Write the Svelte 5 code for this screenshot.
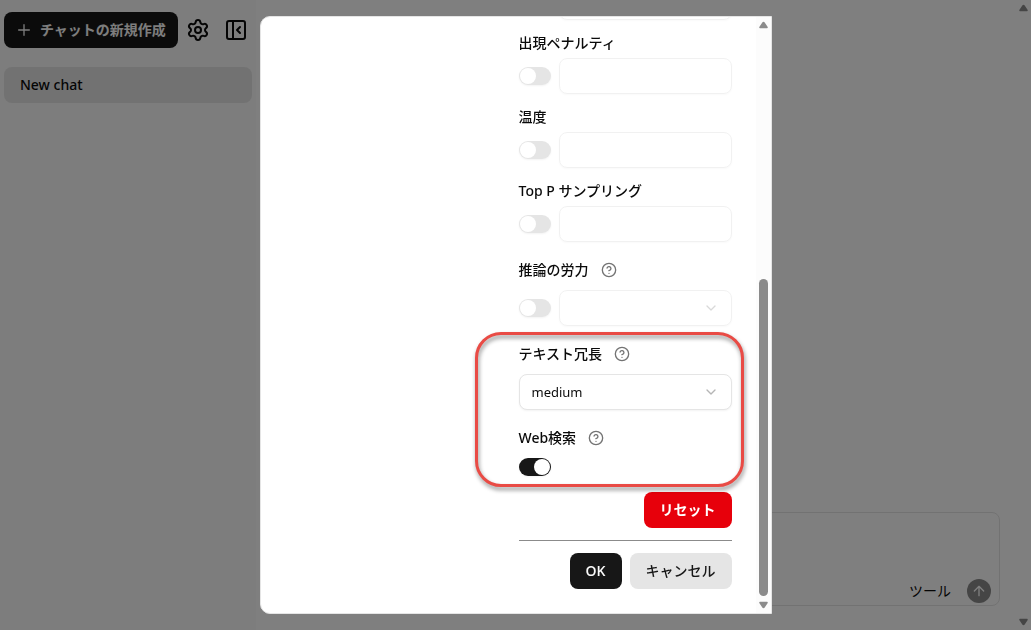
<script>
  const sampling = [
    { id: 'frequency', label: '' },
    { id: 'presence', label: '出現ペナルティ' },
    { id: 'temperature', label: '温度' },
    { id: 'topp', label: 'Top P サンプリング' }
  ];
  let webSearch = $state(true);
  let verbosity = $state('medium');
</script>

{#snippet help(name)}
  <button class="help" type="button" aria-label={name}>
    <svg viewBox="0 0 24 24" width="16" height="16" fill="none" stroke="currentColor" stroke-width="2" stroke-linecap="round" stroke-linejoin="round">
      <circle cx="12" cy="12" r="10" />
      <path d="M9.09 9a3 3 0 0 1 5.83 1c0 2-3 3-3 3" />
      <path d="M12 17h.01" />
    </svg>
  </button>
{/snippet}

{#snippet chevron()}
  <svg class="chevron" viewBox="0 0 24 24" width="16" height="16" fill="none" stroke="currentColor" stroke-width="2" stroke-linecap="round" stroke-linejoin="round">
    <path d="m6 9 6 6 6-6" />
  </svg>
{/snippet}

{#snippet track(thumb)}
  <div class="track" class:dim={!thumb} aria-hidden="true">
    <svg viewBox="0 0 9 7" width="9" height="8"><path d="M4.5 .3 Q5.2 .3 5.7 1.1L8.7 5.5Q9 6.7 8 6.8H1Q0 6.7 .3 5.5L3.3 1.1Q3.8 .3 4.5 .3Z" fill="currentColor" /></svg>
    {#if thumb}<div class="before"></div><div class="thumb"></div>{/if}
    <svg class="down" viewBox="0 0 9 7" width="9" height="8"><path d="M4.5 .3 Q5.2 .3 5.7 1.1L8.7 5.5Q9 6.7 8 6.8H1Q0 6.7 .3 5.5L3.3 1.1Q3.8 .3 4.5 .3Z" fill="currentColor" /></svg>
  </div>
{/snippet}

<div class="page">
  <aside>
    <header>
      <button class="btn dark new" type="button">
        <svg viewBox="0 0 24 24" width="16" height="16" fill="none" stroke="currentColor" stroke-width="2" stroke-linecap="round"><path d="M4 12h16M12 4v16" /></svg>
        チャットの新規作成
      </button>
      <button class="icon" type="button" aria-label="設定">
        <svg viewBox="0 0 24 24" width="24" height="24" fill="none" stroke="currentColor" stroke-width="2" stroke-linecap="round" stroke-linejoin="round">
          <path d="M9.671 4.136a2.34 2.34 0 0 1 4.659 0 2.34 2.34 0 0 0 3.319 1.915 2.34 2.34 0 0 1 2.33 4.033 2.34 2.34 0 0 0 0 3.831 2.34 2.34 0 0 1-2.33 4.033 2.34 2.34 0 0 0-3.319 1.915 2.34 2.34 0 0 1-4.659 0 2.34 2.34 0 0 0-3.32-1.915 2.34 2.34 0 0 1-2.33-4.033 2.34 2.34 0 0 0 0-3.831A2.34 2.34 0 0 1 6.35 6.051a2.34 2.34 0 0 0 3.319-1.915" />
          <circle cx="12" cy="12" r="3" />
        </svg>
      </button>
      <button class="icon" type="button" aria-label="サイドバーを閉じる">
        <svg viewBox="0 0 24 24" width="24" height="24" fill="none" stroke="currentColor" stroke-width="2" stroke-linecap="round" stroke-linejoin="round">
          <rect x="3" y="3" width="18" height="18" rx="2" /><path d="M9 3v18M16 15l-3-3 3-3" />
        </svg>
      </button>
    </header>
    <nav><a href="#chat">New chat</a></nav>
  </aside>
  <main>
    <form class="composer">
      <textarea aria-label="メッセージ"></textarea>
      <div class="tools">
        <button class="tool" type="button">ツール</button>
        <button class="send" type="button" aria-label="送信">
          <svg viewBox="0 0 24 24" width="16" height="16" fill="none" stroke="currentColor" stroke-width="2" stroke-linecap="round" stroke-linejoin="round"><path d="m5 12 7-7 7 7M12 19V5" /></svg>
        </button>
      </div>
    </form>
  </main>
  {@render track(false)}
</div>

<div class="overlay">
  <div class="dialog" role="dialog" aria-modal="true" aria-label="設定">
    <div class="body">
      <div class="settings">
        {#each sampling as p (p.id)}
          <div class="field">
            {#if p.label}<label for={p.id}>{p.label}</label>{/if}
            <div class="row off">
              <input class="switch" type="checkbox" role="switch" aria-label={p.label || p.id} />
              <input class="box" id={p.id} type="text" aria-label={p.label || p.id} disabled />
            </div>
          </div>
        {/each}
        <div class="field">
          <div class="title"><label for="effort">推論の労力</label>{@render help('推論の労力')}</div>
          <div class="row off">
            <input class="switch" type="checkbox" role="switch" aria-label="推論の労力" />
            <div class="select"><select class="box" id="effort" disabled></select>{@render chevron()}</div>
          </div>
        </div>
        <div class="marked">
          <div class="field">
            <div class="title"><label for="verbosity">テキスト冗長</label>{@render help('テキスト冗長')}</div>
            <div class="select">
              <select class="box" id="verbosity" bind:value={verbosity}><option>low</option><option>medium</option><option>high</option></select>
              {@render chevron()}
            </div>
          </div>
          <div class="field">
            <div class="title"><label for="web">Web検索</label>{@render help('Web検索')}</div>
            <input class="switch" id="web" type="checkbox" role="switch" bind:checked={webSearch} />
          </div>
          <div class="ring"></div>
        </div>
        <div class="actions"><button class="btn red" type="button">リセット</button></div>
        <hr />
        <div class="actions">
          <button class="btn dark" type="button">OK</button>
          <button class="btn gray" type="button">キャンセル</button>
        </div>
      </div>
    </div>
    {@render track(true)}
  </div>
</div>

<style>
  :global(body) { margin: 0; }
  .page, .overlay {
    font: 14px/20px "Noto Sans", "Noto Sans CJK JP", sans-serif;
    color: #0a0a0a;
  }
  .page *, .overlay, .overlay * { box-sizing: border-box; }
  button, input, select, textarea { font: inherit; color: inherit; margin: 0; }
  button { border: 0; padding: 0; background: none; }
  svg { display: block; flex: none; }
  .page { display: flex; height: 100vh; background: #fff; }
  aside { width: 256px; flex: none; background: #fafafa; padding: 12px 4px; }
  header { display: flex; align-items: center; gap: 2px; margin-bottom: 19px; }
  .btn {
    height: 36px; padding: 0 16px; border-radius: 8px; font-weight: 500;
    font-family: "Open Sans", "Noto Sans CJK JP", sans-serif;
    display: flex; align-items: center; justify-content: center; gap: 8px; white-space: nowrap;
  }
  .dark { background: #171717; color: #fafafa; font-weight: 600; }
  .red { background: #e7000b; color: #fff; font-weight: 600; }
  .gray { background: #e5e5e5; color: #171717; }
  .new { padding: 0 12px; }
  .icon { width: 36px; height: 36px; display: grid; place-items: center; flex: none; }
  nav a {
    display: flex; align-items: center; height: 36px; padding: 0 16px; border-radius: 8px;
    background: #e5e5e5; color: inherit; text-decoration: none; font-weight: 500;
  }
  main { flex: 1; min-width: 0; display: flex; flex-direction: column; justify-content: flex-end; padding: 24px 16px; }
  .composer { border: 1px solid #e5e5e5; border-radius: 8px; padding: 2px 8px; }
  textarea { display: block; width: 100%; height: 64px; border: 0; background: none; resize: none; outline: 0; }
  .tools { display: flex; justify-content: flex-end; align-items: center; gap: 16px; }
  .send { width: 24px; height: 24px; border-radius: 50%; background: #171717; color: #fff; opacity: .5; display: grid; place-items: center; }

  .track { width: 15px; flex: none; padding: 4px 0; display: flex; flex-direction: column; align-items: center; justify-content: space-between; color: #8b8b8b; background: #fcfcfc; }
  .track.dim { background: #fff; }
  .down { transform: rotate(180deg); }
  .before { flex: 250; }
  .thumb { flex: 316; width: 9px; border-radius: 5px; background: #8b8b8b; margin-bottom: 5px; }

  .overlay { position: fixed; inset: 0; background: rgba(0, 0, 0, .5); display: flex; justify-content: center; padding: 16px; }
  .dialog { width: 100%; max-width: 512px; display: flex; background: #fff; border: 1px solid #e5e5e5; border-radius: 10px 0 0 10px; overflow: hidden; }
  .body { flex: 1; min-width: 0; overflow: hidden; display: flex; align-items: flex-end; justify-content: flex-end; padding: 0 24px 24px; }
  .settings { width: 213px; display: flex; flex-direction: column; gap: 16px; }
  .field { display: flex; flex-direction: column; gap: 8px; }
  label { font-weight: 500; line-height: 14px; }
  .title { display: flex; align-items: center; gap: 8px; height: 24px; }
  .help { width: 24px; height: 24px; display: grid; place-items: center; color: #737373; }
  .row { display: flex; align-items: center; gap: 8px; }
  .switch {
    appearance: none; width: 32px; height: 18px; flex: none; border-radius: 9px; background: #e5e5e5;
    padding: 1px; display: flex; align-items: center; box-shadow: 0 1px 2px rgba(0, 0, 0, .05);
  }
  .switch::before { content: ""; width: 16px; height: 16px; border-radius: 50%; background: #fff; }
  .switch:checked { background: #171717; justify-content: flex-end; }
  .box {
    appearance: none; width: 100%; min-width: 0; height: 36px; padding: 0 12px; border: 1px solid #e5e5e5;
    border-radius: 8px; background: #fff; box-shadow: 0 1px 2px rgba(0, 0, 0, .05); outline: 0; font-size: 13px;
  }
  .off .box, .off .chevron { opacity: .5; }
  .select { display: grid; flex: 1; align-items: center; }
  .select > :global(*) { grid-area: 1 / 1; }
  .chevron { justify-self: end; margin-right: 13px; color: #b5b5b5; pointer-events: none; }
  .marked { position: relative; display: flex; flex-direction: column; gap: 16px; }
  .ring {
    position: absolute; inset: -10px -12px -11px -44px; border: 3px solid #e94b45; border-radius: 26px;
    filter: drop-shadow(1px 3px 2px rgba(0, 0, 0, .45)); pointer-events: none;
  }
  .actions { display: flex; justify-content: flex-end; gap: 8px; }
  hr { width: 100%; height: 1px; border: 0; background: #8b8b8b; margin: -4px 0; }
</style>
